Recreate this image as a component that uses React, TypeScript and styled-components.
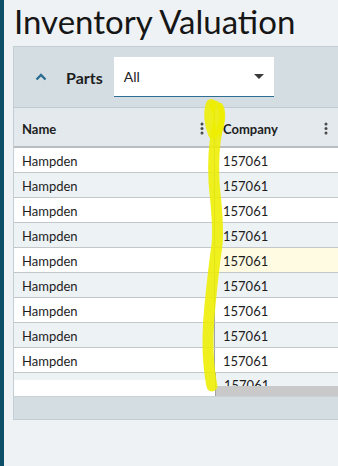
import React from "react";
import styled, { createGlobalStyle } from "styled-components";

const Global = createGlobalStyle`
  html, body { margin: 0; padding: 0; }
  body {
    background: #eef2f5;
    font-family: "Lato", "Open Sans", sans-serif;
    color: #1b1b1b;
    overflow: hidden;
  }
`;

const Page = styled.div`
  position: relative;
  display: flex;
  width: 338px;
  height: 466px;
  overflow: hidden;
  background: #eef2f5;
`;

const Stripe = styled.div`
  width: 4px;
  flex: none;
  background: #0d4f66;
`;

const Main = styled.div`
  flex: 1;
  min-width: 0;
  padding-left: 9px;
  display: flex;
  flex-direction: column;
`;

const Title = styled.h1`
  margin: 0;
  padding: 0 0 0 1px;
  height: 46px;
  font-weight: 400;
  font-size: 33px;
  line-height: 42px;
  color: #161616;
  white-space: nowrap;
`;

const Panel = styled.div`
  background: #d4dde2;
  border: 1px solid #c4cfd5;
  border-right: none;
  display: flex;
  flex-direction: column;
`;

const Toolbar = styled.div`
  height: 60px;
  display: flex;
  align-items: center;
  padding-left: 21px;
  box-sizing: border-box;
`;

const Chevron = styled.svg`
  width: 12px;
  height: 8px;
  margin-right: 19px;
  flex: none;
`;

const Label = styled.span`
  font-weight: 700;
  font-size: 16px;
  margin-right: 11px;
  color: #1d1d1d;
`;

const Select = styled.div`
  width: 160px;
  height: 40px;
  background: #fff;
  border-bottom: 1px solid #2f6f96;
  box-sizing: border-box;
  display: flex;
  align-items: center;
  justify-content: space-between;
  padding: 0 10px 0 10px;
  font-size: 14px;
  color: #222;
`;

const Caret = styled.svg`
  width: 10px;
  height: 5px;
`;

const Grid = styled.div`
  border-top: 1px solid #bfcad0;
  display: flex;
  flex-direction: column;
`;

const HeaderRow = styled.div`
  display: flex;
  height: 38px;
  background: #e3e9ed;
  border-bottom: 2px solid #b9bdc0;
`;

const HeaderCell = styled.div<{ $w?: number; $divider?: boolean }>`
  ${(p) => (p.$w ? `width: ${p.$w}px; flex: none;` : "flex: 1;")}
  box-sizing: border-box;
  display: flex;
  align-items: center;
  justify-content: space-between;
  padding: 3px 10px 0 8px;
  font-weight: 700;
  font-size: 13px;
  color: #1d1d1d;
  ${(p) => (p.$divider ? "border-right: 1px solid #9fa3a6;" : "")}
`;

const Dots = styled.svg`
  width: 4px;
  height: 13px;
  flex: none;
`;

const Row = styled.div<{ $alt: boolean }>`
  display: flex;
  height: 25px;
  box-sizing: border-box;
  background: ${(p) => (p.$alt ? "#edf2f5" : "#ffffff")};
  border-bottom: 1px solid #c3c7ca;
`;

const Cell = styled.div<{ $w?: number; $divider?: boolean; $hl?: boolean }>`
  ${(p) => (p.$w ? `width: ${p.$w}px; flex: none;` : "flex: 1;")}
  box-sizing: border-box;
  display: flex;
  align-items: center;
  padding: 1px 0 0 8px;
  font-size: 13px;
  color: #1d1d1d;
  ${(p) => (p.$divider ? "border-right: 1px solid #9fa3a6;" : "")}
  ${(p) => (p.$hl ? "background: #fffbe3;" : "")}
`;

const Tail = styled.div`
  display: flex;
  height: 23px;
`;

const TailLeft = styled.div`
  width: 201px;
  flex: none;
  display: flex;
  flex-direction: column;
`;

const TailBand = styled.div`
  height: 7px;
  background: #edf2f5;
`;

const TailWhite = styled.div`
  flex: 1;
  background: #fff;
`;

const TailRight = styled.div`
  flex: 1;
  display: flex;
  flex-direction: column;
  border-left: 1px solid #9fa3a6;
`;

const ClippedRow = styled.div`
  height: 13px;
  overflow: hidden;
  background: #edf2f5;
  font-size: 13px;
  padding-left: 8px;
  line-height: 13px;
`;

const ClippedText = styled.span`
  display: block;
  margin-top: 6px;
  color: #1d1d1d;
`;

const Scrollbar = styled.div`
  height: 10px;
  background: #c9c9c9;
`;

const Footer = styled.div`
  height: 22px;
  background: #d4dde2;
  border-top: 1px solid #c9d3d8;
`;

const Highlight = styled.svg`
  position: absolute;
  left: 0;
  top: 0;
  pointer-events: none;
`;

const rows = Array.from({ length: 9 }, (_, i) => i);

function MenuDots() {
  return (
    <Dots viewBox="0 0 4 13">
      <circle cx="2" cy="2" r="1.5" fill="#4a4a4a" />
      <circle cx="2" cy="6.5" r="1.5" fill="#4a4a4a" />
      <circle cx="2" cy="11" r="1.5" fill="#4a4a4a" />
    </Dots>
  );
}

export default function App() {
  return (
    <>
      <Global />
      <Page>
        <Stripe />
        <Main>
          <Title>Inventory Valuation</Title>
          <Panel>
            <Toolbar>
              <Chevron viewBox="0 0 12 8">
                <polyline points="1.5,6.5 6,2 10.5,6.5" fill="none" stroke="#2b6e92" strokeWidth="2.4" />
              </Chevron>
              <Label>Parts</Label>
              <Select>
                <span>All</span>
                <Caret viewBox="0 0 10 5">
                  <polygon points="0,0 10,0 5,5" fill="#3a3a3a" />
                </Caret>
              </Select>
            </Toolbar>
            <Grid>
              <HeaderRow>
                <HeaderCell $w={201} $divider>
                  <span>Name</span>
                  <MenuDots />
                </HeaderCell>
                <HeaderCell>
                  <span>Company</span>
                  <MenuDots />
                </HeaderCell>
              </HeaderRow>
              {rows.map((i) => (
                <Row key={i} $alt={i % 2 === 1}>
                  <Cell $w={201} $divider>Hampden</Cell>
                  <Cell $hl={i === 4}>157061</Cell>
                </Row>
              ))}
              <Tail>
                <TailLeft>
                  <TailBand />
                  <TailWhite />
                </TailLeft>
                <TailRight>
                  <ClippedRow>
                    <ClippedText>157061</ClippedText>
                  </ClippedRow>
                  <Scrollbar />
                </TailRight>
              </Tail>
            </Grid>
            <Footer />
          </Panel>
        </Main>
        <Highlight width="338" height="466" viewBox="0 0 338 466">
          <g fill="none" stroke="#eeee00" strokeOpacity="0.88" strokeLinecap="round" strokeLinejoin="round">
            <path
              strokeWidth="11"
              d="M215,106 C220,112 220,120 217,130 C214,145 213,162 214,182 C216,205 219,225 217,245 C214,265 212,285 210,305 C208,325 207,345 209,365 C210,375 211,382 212,386"
            />
            <path strokeWidth="10" d="M211,104 C208,112 209,124 213,134" />
            <path strokeWidth="6" d="M220,106 C224,112 222,124 219,132" />
          </g>
        </Highlight>
      </Page>
    </>
  );
}
